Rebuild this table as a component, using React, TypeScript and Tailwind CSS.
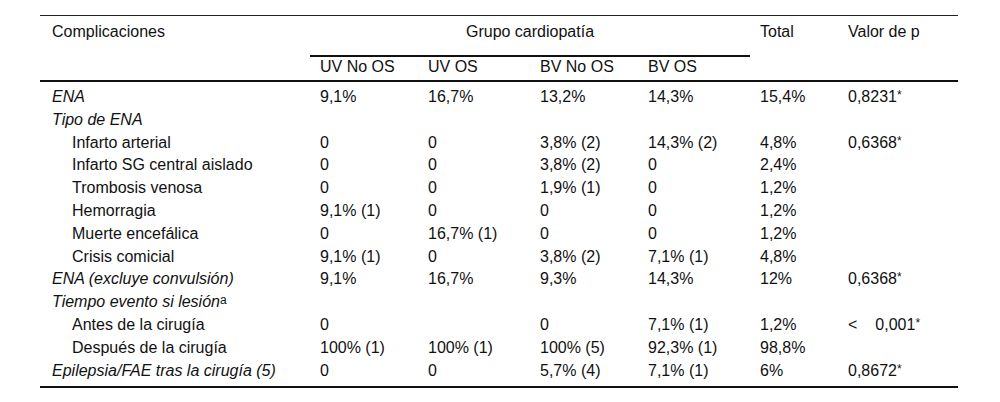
type Row = {
  label: React.ReactNode;
  italic?: boolean;
  indent?: boolean;
  cells: string[];
  p?: React.ReactNode;
};

function P({ v }: { v: string }) {
  return (
    <>
      {v}
      <span className="relative -top-[3px] text-[12px] leading-none">*</span>
    </>
  );
}

const rows: Row[] = [
  { label: "ENA", italic: true, cells: ["9,1%", "16,7%", "13,2%", "14,3%", "15,4%"], p: <P v="0,8231" /> },
  { label: "Tipo de ENA", italic: true, cells: ["", "", "", "", ""] },
  { label: "Infarto arterial", indent: true, cells: ["0", "0", "3,8% (2)", "14,3% (2)", "4,8%"], p: <P v="0,6368" /> },
  { label: "Infarto SG central aislado", indent: true, cells: ["0", "0", "3,8% (2)", "0", "2,4%"] },
  { label: "Trombosis venosa", indent: true, cells: ["0", "0", "1,9% (1)", "0", "1,2%"] },
  { label: "Hemorragia", indent: true, cells: ["9,1% (1)", "0", "0", "0", "1,2%"] },
  { label: "Muerte encefálica", indent: true, cells: ["0", "16,7% (1)", "0", "0", "1,2%"] },
  { label: "Crisis comicial", indent: true, cells: ["9,1% (1)", "0", "3,8% (2)", "7,1% (1)", "4,8%"] },
  { label: "ENA (excluye convulsión)", italic: true, cells: ["9,1%", "16,7%", "9,3%", "14,3%", "12%"], p: <P v="0,6368" /> },
  {
    label: (
      <>
        Tiempo evento si lesión
        <span className="relative -top-[3px] not-italic text-[12px] leading-none">a</span>
      </>
    ),
    italic: true,
    cells: ["", "", "", "", ""],
  },
  {
    label: "Antes de la cirugía",
    indent: true,
    cells: ["0", "", "0", "7,1% (1)", "1,2%"],
    p: (
      <>
        <span>&lt;</span>
        <span className="ml-[18px]">
          <P v="0,001" />
        </span>
      </>
    ),
  },
  { label: "Después de la cirugía", indent: true, cells: ["100% (1)", "100% (1)", "100% (5)", "92,3% (1)", "98,8%"] },
  { label: "Epilepsia/FAE tras la cirugía (5)", italic: true, cells: ["0", "0", "5,7% (4)", "7,1% (1)", "6%"], p: <P v="0,8672" /> },
];

const cols = "grid grid-cols-[270px_108px_112px_108px_112px_88px_120px]";

export default function App() {
  return (
    <div className="bg-white min-h-[402px] pl-[40px] pt-[15px] text-[16px] text-[#111] font-['Liberation_Sans',Arial,sans-serif]">
      <div className="w-[918px]">
        {/* header */}
        <div className={`${cols} border-t border-[#222] border-b-2 border-b-[#111] grid-rows-[41px_23px]`}>
          <div className="row-span-2 pl-3 pt-[7px] leading-[18px]">Complicaciones</div>
          <div className="col-span-4 border-b-2 border-[#111] text-center pt-[7px] leading-[18px]">
            Grupo cardiopatía
          </div>
          <div className="row-span-2 pl-2.5 pt-[7px] leading-[18px] col-start-6 row-start-1">Total</div>
          <div className="row-span-2 pl-2.5 pt-[7px] leading-[18px] col-start-7 row-start-1">Valor de p</div>
          <div className="col-start-2 row-start-2 pl-2.5 leading-[18px] pt-[1px]">UV No OS</div>
          <div className="col-start-3 row-start-2 pl-2.5 leading-[18px] pt-[1px]">UV OS</div>
          <div className="col-start-4 row-start-2 pl-2.5 leading-[18px] pt-[1px]">BV No OS</div>
          <div className="col-start-5 row-start-2 pl-2.5 leading-[18px] pt-[1px]">BV OS</div>
        </div>

        {/* body */}
        <div className="pt-[4px] pb-[4px] border-b-2 border-[#111]">
          {rows.map((r, i) => (
            <div key={i} className={`${cols} leading-[22.8px] h-[22.8px] whitespace-nowrap`}>
              <div className={`${r.indent ? "pl-8" : "pl-3"} ${r.italic ? "italic" : ""}`}>{r.label}</div>
              {r.cells.map((c, j) => (
                <div key={j} className="pl-2.5">
                  {c}
                </div>
              ))}
              <div className="pl-2.5">{r.p}</div>
            </div>
          ))}
        </div>
      </div>
    </div>
  );
}
